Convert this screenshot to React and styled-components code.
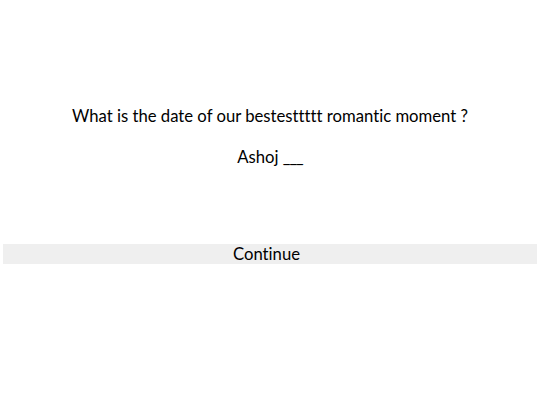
import styled, { createGlobalStyle } from 'styled-components'

const GlobalStyle = createGlobalStyle`
    body {
        margin: 0;
        background: white;
        font-family: Lato, "Noto Sans", sans-serif;
        font-variant-ligatures: none;
        color: black;
    }
`;

const Page = styled.div`
    display: flex;
    flex-direction: column;
    align-items: stretch;
    padding: 106px 3px 0;
`;

const Question = styled.p`
    margin: 0;
    text-align: center;
    font-size: 16.7px;
    line-height: 20px;
`;

const Hint = styled(Question)`
    margin-top: 21px;
`;

const Blank = styled.span`
    letter-spacing: -1px;
`;

const ContinueButton = styled.button`
    margin-top: 77px;
    height: 20px;
    border: none;
    padding: 0 7px 0 0;
    background: #efefef;
    font-family: Lato, "Noto Sans", sans-serif;
    font-variant-ligatures: none;
    font-size: 16.7px;
    color: black;
    cursor: pointer;
`;

const App = () => {
    return (
        <>
            <GlobalStyle />
            <Page>
                <Question>What is the date of our bestesttttt romantic moment ?</Question>
                <Hint>Ashoj <Blank>___</Blank></Hint>
                <ContinueButton>Continue</ContinueButton>
            </Page>
        </>
    )
}

export default App;
